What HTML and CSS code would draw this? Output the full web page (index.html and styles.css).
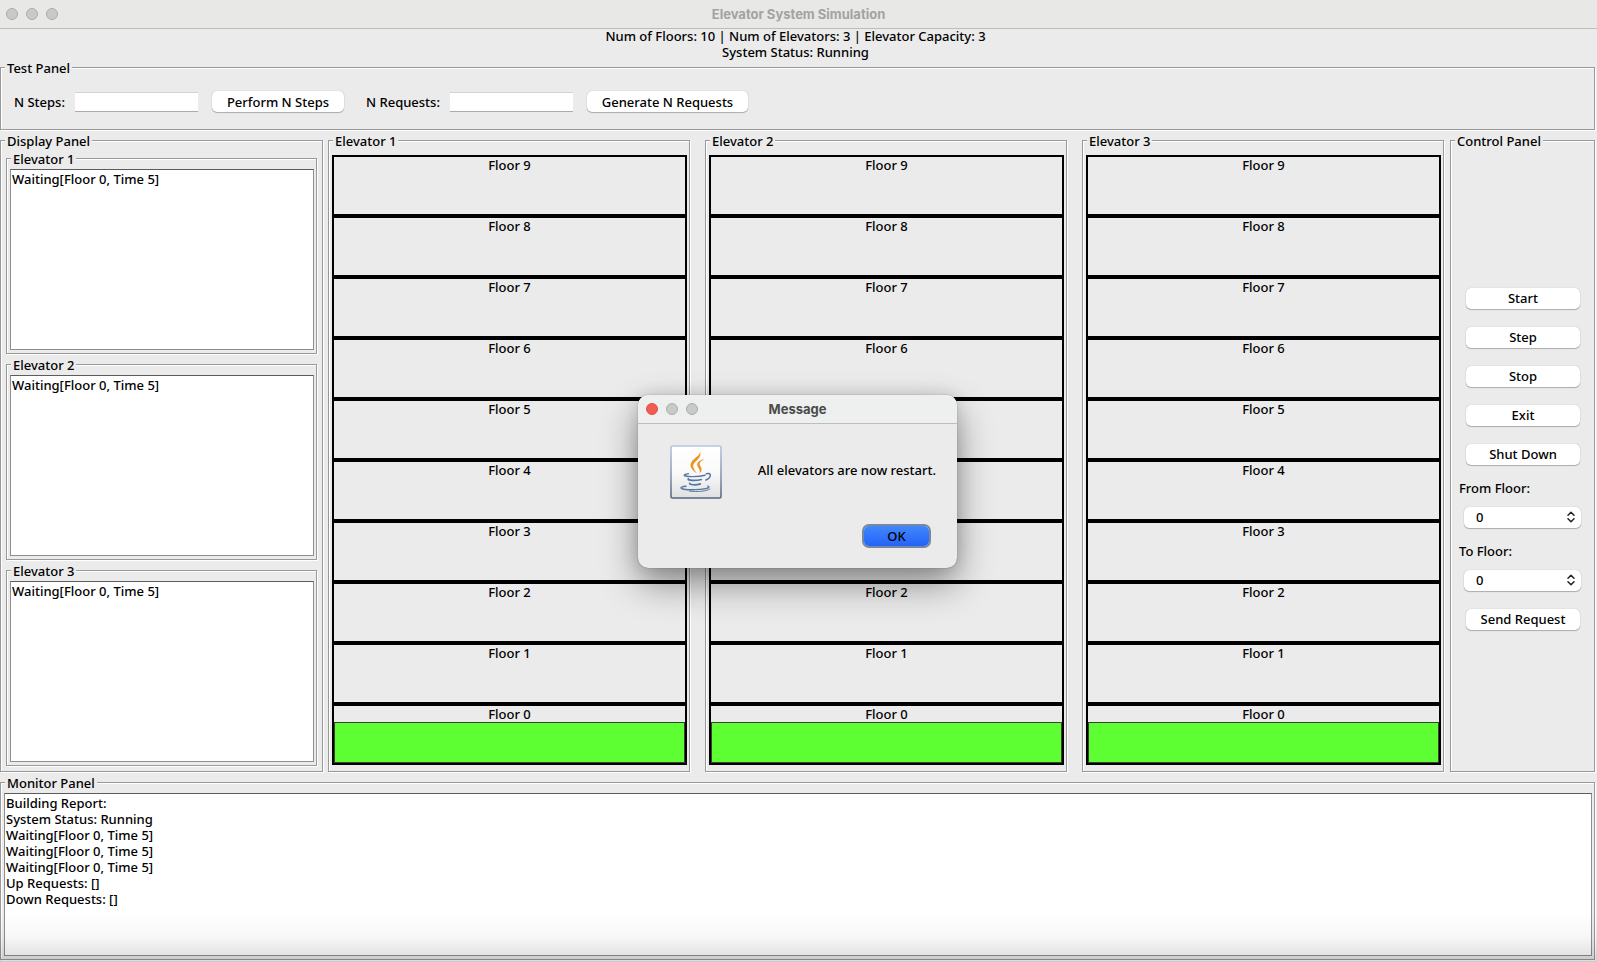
FILE: index.html
```html
<!DOCTYPE html>
<html lang="en">
<head>
<meta charset="utf-8">
<title>Elevator System Simulation</title>
<link rel="stylesheet" href="styles.css">
</head>
<body>
<div class="window">
  <header class="titlebar">
    <div class="lights"><span class="light"></span><span class="light"></span><span class="light"></span></div>
    <h1 class="window-title">Elevator System Simulation</h1>
  </header>

  <div class="summary">
    <p>Num of Floors: 10 | Num of Elevators: 3 | Elevator Capacity: 3</p>
    <p>System Status: Running</p>
  </div>

  <main class="content">
    <fieldset class="panel test-panel">
      <legend>Test Panel</legend>
      <div class="test-row">
        <label for="steps">N Steps:</label>
        <input id="steps" class="field" type="text">
        <button class="btn perform" type="button">Perform N Steps</button>
        <label for="requests">N Requests:</label>
        <input id="requests" class="field" type="text">
        <button class="btn generate" type="button">Generate N Requests</button>
      </div>
    </fieldset>

    <div class="middle">
      <fieldset class="panel display-panel">
        <legend>Display Panel</legend>
        <div class="displays">
          <fieldset class="panel log-panel">
            <legend>Elevator 1</legend>
            <textarea class="log" readonly aria-label="Elevator 1 status">Waiting[Floor 0, Time 5]</textarea>
          </fieldset>
          <fieldset class="panel log-panel">
            <legend>Elevator 2</legend>
            <textarea class="log" readonly aria-label="Elevator 2 status">Waiting[Floor 0, Time 5]</textarea>
          </fieldset>
          <fieldset class="panel log-panel">
            <legend>Elevator 3</legend>
            <textarea class="log" readonly aria-label="Elevator 3 status">Waiting[Floor 0, Time 5]</textarea>
          </fieldset>
        </div>
      </fieldset>

      <div class="shafts">
        <fieldset class="panel shaft">
          <legend>Elevator 1</legend>
          <div class="floors">
            <div class="floor">Floor 9</div>
            <div class="floor">Floor 8</div>
            <div class="floor">Floor 7</div>
            <div class="floor">Floor 6</div>
            <div class="floor">Floor 5</div>
            <div class="floor">Floor 4</div>
            <div class="floor">Floor 3</div>
            <div class="floor">Floor 2</div>
            <div class="floor">Floor 1</div>
            <div class="floor">Floor 0<div class="car"></div></div>
          </div>
        </fieldset>
        <fieldset class="panel shaft">
          <legend>Elevator 2</legend>
          <div class="floors">
            <div class="floor">Floor 9</div>
            <div class="floor">Floor 8</div>
            <div class="floor">Floor 7</div>
            <div class="floor">Floor 6</div>
            <div class="floor">Floor 5</div>
            <div class="floor">Floor 4</div>
            <div class="floor">Floor 3</div>
            <div class="floor">Floor 2</div>
            <div class="floor">Floor 1</div>
            <div class="floor">Floor 0<div class="car"></div></div>
          </div>
        </fieldset>
        <fieldset class="panel shaft">
          <legend>Elevator 3</legend>
          <div class="floors">
            <div class="floor">Floor 9</div>
            <div class="floor">Floor 8</div>
            <div class="floor">Floor 7</div>
            <div class="floor">Floor 6</div>
            <div class="floor">Floor 5</div>
            <div class="floor">Floor 4</div>
            <div class="floor">Floor 3</div>
            <div class="floor">Floor 2</div>
            <div class="floor">Floor 1</div>
            <div class="floor">Floor 0<div class="car"></div></div>
          </div>
        </fieldset>
      </div>

      <fieldset class="panel control-panel">
        <legend>Control Panel</legend>
        <div class="controls">
          <button class="btn" type="button">Start</button>
          <button class="btn" type="button">Step</button>
          <button class="btn" type="button">Stop</button>
          <button class="btn" type="button">Exit</button>
          <button class="btn" type="button">Shut Down</button>
          <div class="choice">
            <label for="from">From Floor:</label>
            <div class="select-wrap">
              <select id="from" class="select"><option>0</option><option>1</option><option>2</option><option>3</option><option>4</option><option>5</option><option>6</option><option>7</option><option>8</option><option>9</option></select>
              <svg class="arrows" viewBox="0 0 8 12" aria-hidden="true"><path d="M1 4.2 4 1.2l3 3M1 7.8l3 3 3-3"/></svg>
            </div>
          </div>
          <div class="choice">
            <label for="to">To Floor:</label>
            <div class="select-wrap">
              <select id="to" class="select"><option>0</option><option>1</option><option>2</option><option>3</option><option>4</option><option>5</option><option>6</option><option>7</option><option>8</option><option>9</option></select>
              <svg class="arrows" viewBox="0 0 8 12" aria-hidden="true"><path d="M1 4.2 4 1.2l3 3M1 7.8l3 3 3-3"/></svg>
            </div>
          </div>
          <button class="btn" type="button">Send Request</button>
        </div>
      </fieldset>
    </div>

    <fieldset class="panel monitor-panel">
      <legend>Monitor Panel</legend>
      <textarea class="log report" rows="10" readonly aria-label="Monitor report">Building Report:
System Status: Running
Waiting[Floor 0, Time 5]
Waiting[Floor 0, Time 5]
Waiting[Floor 0, Time 5]
Up Requests: []
Down Requests: []</textarea>
    </fieldset>
  </main>
  <div class="edge-shade"></div>

  <dialog class="message" open aria-labelledby="message-title">
    <header class="titlebar message-bar">
      <div class="lights"><span class="light light-close"></span><span class="light"></span><span class="light"></span></div>
      <h2 id="message-title" class="window-title">Message</h2>
    </header>
    <div class="message-body">
      <svg class="java" viewBox="0 0 52 54" aria-hidden="true">
        <defs>
          <linearGradient id="tile" x1="0" y1="0" x2="0" y2="1"><stop offset="0" stop-color="#fff"/><stop offset=".5" stop-color="#fafafa"/><stop offset="1" stop-color="#e0e0e0"/></linearGradient>
          <linearGradient id="rim" x1="0" y1="0" x2="0" y2="1"><stop offset="0" stop-color="#b3c6dd"/><stop offset=".6" stop-color="#8295ae"/><stop offset="1" stop-color="#55677f"/></linearGradient>
        </defs>
        <rect x="1" y="1" width="50" height="52" rx="1.5" fill="url(#tile)" stroke="url(#rim)" stroke-width="1.6"/>
        <g fill="#e8961e">
          <path d="M30 6.500c1.700 5-1.800 7.700-5 10.700-3.600 3.500-1.400 6.300 2 11.300-4.700-3.200-8.800-7.300-5-12.300 3-3.900 8-5.200 8-9.700z"/>
          <path d="M34.600 14.300c-4.200 1.800-6.100 3.700-4.100 6.900 1.700 2.700 1.600 4.700-.9 7.300.5-2.400.2-3.700-1.300-5.900-3-4.500.8-7.700 6.300-8.300z"/>
        </g>
        <g fill="none" stroke="#54799f" stroke-linecap="round">
          <path stroke-width="1.400" d="M18.500 28.600c-3.600.6-5 1.400-4 2.100 2.300 1.400 14.500 1.100 20.500-.4"/>
          <path stroke-width="1.500" d="M36.300 28.700c4.200-1.200 5.300 1.700 2.800 4.300-1 1-2.100 1.600-3.200 2"/>
          <path stroke-width="1.700" d="M18.300 33.800c-1.200 1.700 7.500 2.300 13 .7"/>
          <path stroke-width="1.700" d="M19.600 38.300c-.4 1.600 6.300 2.100 10.700.6"/>
          <path stroke-width="1.400" d="M16 41.200c-3.600.3-5.900 1.300-4.700 2.100 3.300 2.100 24.500 1.800 27.300-.7.500-.6.200-1.100-.6-1.500"/>
          <path stroke-width="1" d="M19.500 46.100c7.800 1 17.400.2 20.400-2.100"/>
        </g>
      </svg>
      <p class="message-text">All elevators are now restart.</p>
      <button class="btn ok" type="button">OK</button>
    </div>
  </dialog>
</div>
</body>
</html>
```
FILE: styles.css
```css
* {
  box-sizing: border-box;
}

body {
  margin: 0;
  background: #ebebeb;
  color: #000;
  font: 500 13px/16px "Noto Sans", "Open Sans", sans-serif;
}

h1, h2, p {
  margin: 0;
}

button, input, select, textarea {
  font: inherit;
  color: inherit;
}

.window {
  position: relative;
  display: flex;
  flex-direction: column;
  min-height: 100vh;
}

.titlebar {
  display: grid;
  grid-template-columns: 1fr auto 1fr;
  align-items: center;
  height: 29px;
  padding: 0 6px;
  background: #e8e8e6;
  border-bottom: 1px solid #bdbdbd;
}

.lights {
  display: flex;
  gap: 8px;
}

.light {
  width: 12px;
  height: 12px;
  border: 1px solid #adadab;
  border-radius: 50%;
  background: #c9c9c7;
}

.light-close {
  border-color: #dc5145;
  background: #f15e51;
}

.window-title {
  font: 700 13px/16px Inter, sans-serif;
  color: #a3a3a1;
}

.summary {
  margin-top: -1px;
  padding-right: 6px;
  text-align: center;
}

.content {
  flex: 1;
  display: flex;
  flex-direction: column;
  gap: 3px;
  padding: 0 2px 2px 0;
}

/* Etched border with the title set into its top edge */
.panel {
  min-width: 0;
  margin: 0;
  padding: 0;
  border: 1px solid #999;
  box-shadow: 1px 1px 0 #fff, inset 1px 1px 0 #fff;
}

.panel > legend {
  height: 15px;
  margin-left: 4px;
  padding: 0 2px;
  background: #ebebeb;
}

.test-row {
  display: flex;
  align-items: center;
  padding: 16px 13px 17px;
}

.field {
  width: 123px;
  height: 20px;
  margin: 0 14px 0 10px;
  padding: 0 4px;
  border: 0;
  border-top: 1px solid #d2d2d2;
  border-bottom: 1px solid #ababab;
  background: #fff;
}

.btn {
  height: 21px;
  padding: 0;
  border: 0;
  border-radius: 5px;
  background: #fff;
  box-shadow: 0 0 1px rgba(0, 0, 0, .3), 0 1px 1px rgba(0, 0, 0, .25);
  line-height: 20px;
}

.perform {
  width: 132px;
  margin-right: 22px;
}

.generate {
  width: 161px;
}

.middle {
  flex: 1;
  display: flex;
}

.display-panel {
  width: 323px;
  margin-right: 5px;
}

.displays {
  display: grid;
  grid-template-rows: repeat(3, 1fr);
  gap: 3px;
  height: 100%;
  padding: 3px 5px 5px;
}

.log-panel,
.monitor-panel {
  padding: 3px 2px 3px 3px;
}

.log-panel > legend,
.monitor-panel > legend,
.shaft > legend {
  margin-left: 1px;
}

.log {
  display: block;
  width: 100%;
  height: 100%;
  padding: 1px 1px 0;
  border: 1px solid #8e8e8e;
  border-top-color: #5c5c5c;
  background: #fff;
  resize: none;
  outline: 0;
  overflow: hidden;
}

.shafts {
  flex: 1;
  display: grid;
  grid-template-columns: repeat(3, 1fr);
  gap: 15px;
}

.shaft {
  padding: 7px 2px 6px 3px;
}

.floors {
  display: grid;
  grid-template-rows: repeat(10, 1fr);
  height: 100%;
}

.floor {
  display: flex;
  flex-direction: column;
  min-height: 60px;
  border: 2px solid #000;
  text-align: center;
}

.car {
  flex: 1;
  border: 1px solid #3a3f38;
  background: #5dff33;
}

.control-panel {
  width: 145px;
  margin-left: 6px;
}

.controls {
  display: flex;
  flex-direction: column;
  justify-content: center;
  gap: 18px;
  height: 100%;
  padding: 0 14px 2px 15px;
}

.choice {
  display: flex;
  flex-direction: column;
  gap: 11px;
  margin: -3px -1px 0 -2px;
}

.choice label {
  margin-left: -5px;
}

.select-wrap {
  position: relative;
}

.select {
  display: block;
  width: 100%;
  height: 21px;
  padding: 0 12px;
  border: 0;
  border-radius: 5px;
  background: #fff;
  box-shadow: 0 0 1px rgba(0, 0, 0, .3), 0 1px 1px rgba(0, 0, 0, .25);
  appearance: none;
}

.arrows {
  position: absolute;
  top: 4px;
  right: 6px;
  width: 8px;
  height: 12px;
  fill: none;
  stroke: #222;
  stroke-width: 1.5;
  stroke-linecap: round;
  stroke-linejoin: round;
  pointer-events: none;
}

/* Shade falling on the lower edge of the window */
.edge-shade {
  position: absolute;
  inset: auto 0 0;
  height: 50px;
  background: linear-gradient(rgba(0, 0, 0, 0), rgba(0, 0, 0, .03) 50%, rgba(0, 0, 0, .14));
  pointer-events: none;
}

.message {
  position: absolute;
  inset: 0 2px 0 0;
  width: 319px;
  height: fit-content;
  margin: auto;
  padding: 0;
  border: 0;
  border-radius: 10px;
  background: #ebebeb;
  color: #000;
  box-shadow: 0 0 1px rgba(0, 0, 0, .6), 0 16px 36px rgba(0, 0, 0, .42), 0 0 16px rgba(0, 0, 0, .12);
  overflow: hidden;
}

.message-bar {
  padding: 0 8px;
  background: #eef0ef;
}

.message-bar .window-title {
  color: #4a4a4a;
}

.message-body {
  display: grid;
  grid-template-columns: 52px auto;
  justify-content: space-between;
  align-items: center;
  row-gap: 27px;
  padding: 21px 21px 22px 32px;
}

.message-text {
  padding-bottom: 3px;
}

.java {
  width: 52px;
  height: 54px;
}

.ok {
  grid-column: 2;
  justify-self: end;
  width: 65px;
  height: 20px;
  margin-right: 7px;
  background: linear-gradient(#4287fb, #2463f8);
  box-shadow: 0 0 0 2px #75889f;
  line-height: 18px;
}
```
